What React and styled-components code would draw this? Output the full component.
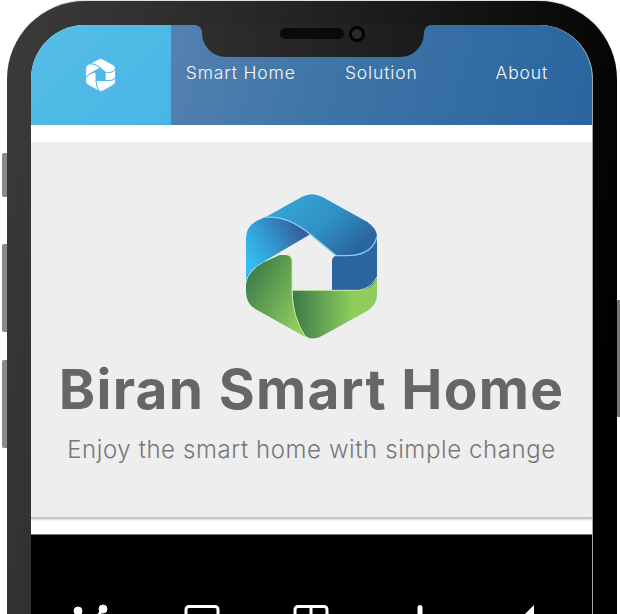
import React from 'react';
import styled, { createGlobalStyle } from 'styled-components';

const GlobalStyle = createGlobalStyle`
    html, body {
        margin: 0;
        padding: 0;
        background: #fff;
    }
    #root {
        width: 620px;
        height: 614px;
        overflow: hidden;
    }
`;

const Stage = styled.div`
    position: relative;
    width: 620px;
    height: 614px;
    overflow: hidden;
    background: #fff;
    padding-top: 1px;
    box-sizing: border-box;
    font-family: "Inter", "Liberation Sans", sans-serif;
`;

const SideButton = styled.span`
    position: absolute;
    top: ${p => p.$top}px;
    height: ${p => p.$height}px;
    background: ${p => (p.$right ? '#777' : '#8a8a8a')};
    ${p => (p.$right
        ? 'right: 0; width: 3px;'
        : 'left: 2px; width: 5px; border-radius: 2px 0 0 2px;')}
`;

const Phone = styled.div`
    box-sizing: border-box;
    width: 610px;
    height: 760px;
    margin-left: 7px;
    padding: 24px 24px 0 24px;
    border-radius: 78px 78px 0 0;
    background: linear-gradient(100deg, #3b3b3b 0%, #2a2a2a 30%, #141414 62%, #000 90%);
    box-shadow: 0 -1px 0 #e0e0e0;
`;

const Screen = styled.div`
    position: relative;
    box-sizing: border-box;
    width: 562px;
    height: 700px;
    border-radius: 54px 54px 0 0;
    border-right: 1px solid #a4a4a4;
    overflow: hidden;
    background: #fff;
`;

const Notch = styled.div`
    position: absolute;
    z-index: 2;
    top: 0;
    left: 171px;
    width: 222px;
    height: 32px;
    display: flex;
    align-items: flex-start;
    justify-content: center;
    gap: 5px;
    padding: 1px 0 0 19px;
    box-sizing: border-box;
    background: linear-gradient(90deg, #2e2e2e, #1b1b1b);
    border-radius: 0 0 24px 24px;

    &::before, &::after {
        content: "";
        position: absolute;
        top: 0;
        width: 7px;
        height: 7px;
    }
    &::before {
        left: -7px;
        background: radial-gradient(circle at 0 100%, transparent 6.5px, #2e2e2e 7px);
    }
    &::after {
        right: -7px;
        background: radial-gradient(circle at 100% 100%, transparent 6.5px, #1b1b1b 7px);
    }
`;

const Speaker = styled.span`
    width: 64px;
    height: 11px;
    margin-top: 2px;
    border-radius: 6px;
    background: #0a0a0a;
`;

const Camera = styled.span`
    box-sizing: border-box;
    width: 16px;
    height: 16px;
    border-radius: 50%;
    background: #2a2a2a;
    border: 3px solid #030303;
`;

const Header = styled.header`
    display: flex;
    height: 100px;
`;

const LogoCell = styled.div`
    width: 140px;
    display: flex;
    align-items: center;
    justify-content: center;
    background: linear-gradient(135deg, #56bde8, #48b6e4);
`;

const Nav = styled.nav`
    flex: 1;
    display: flex;
    align-items: flex-start;
    background: linear-gradient(105deg, #5481b0 0%, #3f76a8 35%, #2a659f 100%);
`;

const NavItem = styled.a`
    width: 140.5px;
    margin-top: 36px;
    text-align: center;
    color: #f4f7fa;
    font-size: 17.5px;
    font-weight: 300;
    line-height: 24px;
    letter-spacing: 0.85px;
`;

const Hero = styled.section`
    box-sizing: border-box;
    height: 377px;
    margin-top: 17px;
    padding-top: 43px;
    display: flex;
    flex-direction: column;
    align-items: center;
    background: #eeeeee;
    border-bottom: 2px solid #c4c4c4;
    box-shadow: 0 1px 2px #d8d8d8;
`;

const Title = styled.h1`
    margin: 13px 0 0;
    color: #666666;
    font-size: 55px;
    line-height: 62px;
    font-weight: 700;
    letter-spacing: 1.3px;
    white-space: nowrap;
`;

const Subtitle = styled.p`
    margin: 15px 0 0;
    color: #777777;
    font-size: 24px;
    font-weight: 300;
    line-height: 30px;
    letter-spacing: 0.6px;
    white-space: nowrap;
`;

const Dock = styled.div`
    height: 200px;
    margin-top: 15px;
    padding: 70px 44px 0;
    display: flex;
    justify-content: space-between;
    align-items: flex-start;
    background: #000;
    border-top: 1px solid #777;
`;

const DockIcon = styled.svg`
    width: 40px;
    height: 40px;
    fill: #fff;
    stroke: #fff;
    overflow: visible;
`;

// band outlines of the hexagon mark, in a 480 box
const bands = {
    top: 'M105 97 L215 35 Q245 20 275 35 L410 110 Q440 130 440 155 Q425 212 350 212 L318 212 L240 148 Q170 90 105 97 Z',
    left: 'M47 290 L47 160 Q47 125 80 107 L105 96 Q170 90 240 148 L100 230 Q55 255 47 290 Z',
    right: 'M305 315 L305 228 Q305 213 320 212 L350 212 Q420 212 440 155 L440 275 Q430 315 380 315 Z',
    leftGreen: 'M47 300 Q50 260 100 232 L148 210 L170 210 Q185 212 185 230 L185 320 Q185 390 225 456 L75 372 Q47 355 47 320 Z',
    bottom: 'M187 316 L385 316 Q425 310 440 275 L440 330 Q440 360 410 378 L280 450 Q245 470 225 452 Q187 400 187 316 Z',
};

const SmallLogo = () => (
    <svg width="31" height="34" viewBox="40 20 407 447" fill="#fff" stroke="#50bbe7" strokeWidth="12">
        {Object.keys(bands).map(name => (
            <path key={name} d={bands[name]} />
        ))}
    </svg>
);

const HexLogo = () => (
    <svg width="160" height="160" viewBox="5 0 480 480">
        <defs>
            <linearGradient id="topBlue" x1="0" y1="0" x2="1" y2="0.6">
                <stop offset="0" stopColor="#38acdc" />
                <stop offset="0.6" stopColor="#2f91c6" />
                <stop offset="1" stopColor="#2a659f" />
            </linearGradient>
            <linearGradient id="leftBlue" x1="0.1" y1="0.75" x2="0.9" y2="0.3">
                <stop offset="0" stopColor="#33bdf0" />
                <stop offset="0.45" stopColor="#3298d0" />
                <stop offset="1" stopColor="#35609c" />
            </linearGradient>
            <linearGradient id="leftGreen" x1="0.1" y1="0.2" x2="0.9" y2="0.85">
                <stop offset="0" stopColor="#3f7f4a" />
                <stop offset="1" stopColor="#90cd5c" />
            </linearGradient>
            <linearGradient id="bottomGreen" x1="0" y1="0" x2="1" y2="0">
                <stop offset="0" stopColor="#3a7a48" />
                <stop offset="0.72" stopColor="#90cd5c" />
            </linearGradient>
        </defs>
        <path d={bands.leftGreen} fill="url(#leftGreen)" />
        <path d={bands.bottom} fill="url(#bottomGreen)" />
        <path d={bands.right} fill="#2b659f" />
        <path d={bands.left} fill="url(#leftBlue)" />
        <path d={bands.top} fill="url(#topBlue)" />
        <path d="M105 97 Q170 90 240 148 L318 212 L350 212 Q425 212 440 155" fill="none" stroke="#7ed3f3" strokeWidth="4" />
        <path d="M187 316 L385 316 Q425 310 440 275" fill="none" stroke="#c6e3a0" strokeWidth="3" />
        <path d="M170 210 Q185 212 185 230 L185 320 Q185 390 225 456" fill="none" stroke="#c6e3a0" strokeWidth="3" />
    </svg>
);

const navItems = ['Smart Home', 'Solution', 'About'];

const App = () => {
    return (
        <Stage>
            <GlobalStyle />
            <SideButton $top={153} $height={44} />
            <SideButton $top={244} $height={88} />
            <SideButton $top={360} $height={88} />
            <SideButton $right $top={300} $height={117} />
            <Phone>
                <Screen>
                    <Notch>
                        <Speaker />
                        <Camera />
                    </Notch>
                    <Header>
                        <LogoCell>
                            <SmallLogo />
                        </LogoCell>
                        <Nav>
                            {navItems.map(item => (
                                <NavItem key={item}>{item}</NavItem>
                            ))}
                        </Nav>
                    </Header>
                    <Hero>
                        <HexLogo />
                        <Title>Biran Smart Home</Title>
                        <Subtitle>Enjoy the smart home with simple change</Subtitle>
                    </Hero>
                    <Dock>
                        <DockIcon viewBox="0 0 40 40">
                            <circle cx="3" cy="6" r="4" />
                            <circle cx="28" cy="4" r="4" />
                            <path d="M3 6 L15 22 L28 4" fill="none" strokeWidth="3" />
                        </DockIcon>
                        <DockIcon viewBox="0 0 40 40">
                            <rect x="3" y="1.5" width="32" height="30" rx="3" fill="none" strokeWidth="3" />
                        </DockIcon>
                        <DockIcon viewBox="0 0 40 40">
                            <rect x="3" y="1.5" width="32" height="30" rx="3" fill="none" strokeWidth="3" />
                            <rect x="17.5" y="1.5" width="3" height="30" stroke="none" />
                        </DockIcon>
                        <DockIcon viewBox="0 0 40 40">
                            <rect x="17.5" y="0" width="5" height="30" rx="2.5" stroke="none" />
                        </DockIcon>
                        <DockIcon viewBox="0 0 40 40">
                            <path d="M26 0 L26 26 L0 26 Z" stroke="none" />
                        </DockIcon>
                    </Dock>
                </Screen>
            </Phone>
        </Stage>
    );
};

export default App;
